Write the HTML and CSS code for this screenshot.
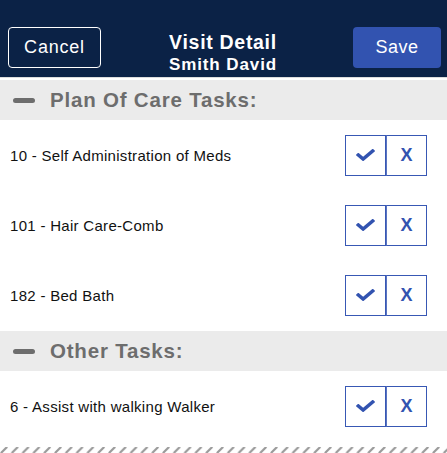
FILE: index.html
```html
<!DOCTYPE html>
<html lang="en">
<head>
    <meta charset="UTF-8">
    <meta name="viewport" content="width=device-width, initial-scale=1.0">
    <title>Visit Detail</title>
    <link rel="stylesheet" href="styles.css">
</head>
<body>
    <div class="header">
        <button class="cancel">Cancel</button>
        <div class="title">
            <div class="title-main">Visit Detail</div>
            <div class="title-sub">Smith David</div>
        </div>
        <button class="save">Save</button>
    </div>

    <div class="section">
        <span class="minus"></span>
        <span class="section-title">Plan Of Care Tasks:</span>
    </div>
    <div class="task">
        <span class="task-name">10 - Self Administration of Meds</span>
        <div class="actions">
            <button class="act"><svg width="19" height="12" viewBox="0 64 512 384" preserveAspectRatio="none"><path d="M173.9 439.4l-166.4-166.4c-10-10-10-26.2 0-36.2l36.2-36.2c10-10 26.2-10 36.2 0L192 312.7 432.1 72.6c10-10 26.2-10 36.2 0l36.2 36.2c10 10 10 26.2 0 36.2l-294.4 294.4c-10 10-26.2 10-36.2 0z"/></svg></button>
            <button class="act">X</button>
        </div>
    </div>
    <div class="task">
        <span class="task-name">101 - Hair Care-Comb</span>
        <div class="actions">
            <button class="act"><svg width="19" height="12" viewBox="0 64 512 384" preserveAspectRatio="none"><path d="M173.9 439.4l-166.4-166.4c-10-10-10-26.2 0-36.2l36.2-36.2c10-10 26.2-10 36.2 0L192 312.7 432.1 72.6c10-10 26.2-10 36.2 0l36.2 36.2c10 10 10 26.2 0 36.2l-294.4 294.4c-10 10-26.2 10-36.2 0z"/></svg></button>
            <button class="act">X</button>
        </div>
    </div>
    <div class="task">
        <span class="task-name">182 - Bed Bath</span>
        <div class="actions">
            <button class="act"><svg width="19" height="12" viewBox="0 64 512 384" preserveAspectRatio="none"><path d="M173.9 439.4l-166.4-166.4c-10-10-10-26.2 0-36.2l36.2-36.2c10-10 26.2-10 36.2 0L192 312.7 432.1 72.6c10-10 26.2-10 36.2 0l36.2 36.2c10 10 10 26.2 0 36.2l-294.4 294.4c-10 10-26.2 10-36.2 0z"/></svg></button>
            <button class="act">X</button>
        </div>
    </div>

    <div class="section second">
        <span class="minus"></span>
        <span class="section-title">Other Tasks:</span>
    </div>
    <div class="task">
        <span class="task-name">6 - Assist with walking Walker</span>
        <div class="actions">
            <button class="act"><svg width="19" height="12" viewBox="0 64 512 384" preserveAspectRatio="none"><path d="M173.9 439.4l-166.4-166.4c-10-10-10-26.2 0-36.2l36.2-36.2c10-10 26.2-10 36.2 0L192 312.7 432.1 72.6c10-10 26.2-10 36.2 0l36.2 36.2c10 10 10 26.2 0 36.2l-294.4 294.4c-10 10-26.2 10-36.2 0z"/></svg></button>
            <button class="act">X</button>
        </div>
    </div>

    <svg class="tear" width="447" height="6">
        <defs>
            <pattern id="slash" width="10.8" height="6" patternUnits="userSpaceOnUse">
                <path d="M1.5 5.5 L6.5 0.5" stroke="#9a9a9a" stroke-width="2.2" stroke-linecap="round"/>
            </pattern>
        </defs>
        <rect width="447" height="6" fill="url(#slash)"/>
    </svg>
</body>
</html>
```

FILE: styles.css
```css
body {
    margin: 0;
    padding: 0;
    background: #fff;
    font-family: "Liberation Sans", Arial, sans-serif;
    width: 447px;
    height: 453px;
    overflow: hidden;
}

.header {
    height: 77px;
    background: #0b2246;
    border-bottom: 1px solid #dcdcdc;
    display: flex;
    justify-content: space-between;
    align-items: flex-start;
    padding: 0 6px 0 8px;
    box-sizing: content-box;
}

.header button {
    margin-top: 27px;
    height: 41px;
    font-family: "Liberation Sans", Arial, sans-serif;
    font-size: 18px;
    color: #fff;
    border-radius: 4px;
}

.cancel {
    width: 93px;
    background: transparent;
    border: 1px solid #fff;
    letter-spacing: 0.8px;
}

.save {
    width: 88px;
    background: #3253b0;
    border: none;
    letter-spacing: 0.5px;
}

.title {
    color: #fff;
    font-weight: bold;
    text-align: center;
    padding-top: 32px;
    padding-right: 8px;
}

.title-main {
    font-size: 19.5px;
    line-height: 20px;
    letter-spacing: 0.7px;
}

.title-sub {
    font-size: 17px;
    line-height: 22px;
    margin-top: 2px;
    letter-spacing: 0.9px;
}

.section {
    margin-top: 2px;
    height: 40px;
    background: #ebebeb;
    display: flex;
    align-items: center;
    padding-left: 13px;
}

.section.second {
    margin-top: 1px;
}

.minus {
    width: 22px;
    height: 5px;
    border-radius: 3px;
    background: #6d6d6d;
    margin-right: 15px;
}

.section-title {
    font-size: 20.5px;
    font-weight: bold;
    color: #6d6d6d;
    letter-spacing: 0.8px;
}

.task {
    height: 70px;
    display: flex;
    align-items: center;
    justify-content: space-between;
    padding: 0 20px 0 10px;
}

.task-name {
    font-size: 15px;
    color: #111;
    letter-spacing: 0.3px;
}

.actions {
    display: flex;
}

.act {
    width: 41px;
    height: 41px;
    padding: 0;
    background: #fff;
    border: 1px solid #3858b4;
    color: #3253b0;
    fill: #3253b0;
    font-family: "Liberation Sans", Arial, sans-serif;
    font-size: 18px;
    font-weight: bold;
    display: flex;
    align-items: center;
    justify-content: center;
}

.act + .act {
    border-left-color: #5a74c0;
}

.tear {
    display: block;
    margin-top: 6px;
}
```
